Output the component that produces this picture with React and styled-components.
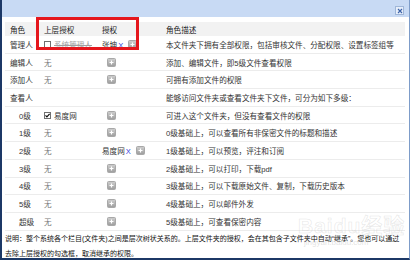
import React from "react";
import styled, { createGlobalStyle } from "styled-components";

const GlobalStyle = createGlobalStyle`
  html, body {
    margin: 0;
    padding: 0;
    background: #fff;
  }
  body {
    font-family: "Liberation Sans", "Noto Sans CJK SC", sans-serif;
    font-size: 7.6px;
    color: #333;
  }
  * {
    box-sizing: border-box;
  }
`;

const roles = [
  {
    name: "管理人",
    upper: { kind: "strike", text: "系统管理人" },
    grants: ["张坤"],
    desc: "本文件夹下拥有全部权限，包括审核文件、分配权限、设置标签组等",
  },
  { name: "编辑人", upper: "无", desc: "添加、编辑文件，即5级文件查看权限" },
  { name: "添加人", upper: "无", desc: "可拥有添加文件的权限" },
  {
    name: "查看人",
    group: true,
    desc: "能够访问文件夹或查看文件夹下文件，可分为如下多级：",
  },
  {
    name: "0级",
    level: true,
    upper: { kind: "checked", text: "易度网" },
    desc: "可进入这个文件夹，但没有查看文件的权限",
  },
  { name: "1级", level: true, upper: "无", desc: "0级基础上，可以查看所有非保密文件的标题和描述" },
  {
    name: "2级",
    level: true,
    upper: "无",
    grants: ["易度网"],
    desc: "1级基础上，可以预览，评注和订阅",
  },
  { name: "3级", level: true, upper: "无", desc: "2级基础上，可以打印，下载pdf" },
  { name: "4级", level: true, upper: "无", desc: "3级基础上，可以下载原始文件、复制，下载历史版本" },
  { name: "5级", level: true, upper: "无", desc: "4级基础上，可以邮件外发" },
  { name: "超级", level: true, upper: "无", desc: "5级基础上，可查看保密内容" },
];

const PlusIcon = () => (
  <svg width="9" height="9" viewBox="0 0 9 9">
    <defs>
      <linearGradient id="pg" x1="0" y1="0" x2="0" y2="1">
        <stop offset="0" stopColor="#cfcfcf" />
        <stop offset="1" stopColor="#9c9c9c" />
      </linearGradient>
    </defs>
    <rect x="0.5" y="0.5" width="8" height="8" rx="1" fill="url(#pg)" stroke="#a8a8a8" />
    <path d="M2.5 4.5h4M4.5 2.5v4" stroke="#fff" strokeWidth="1.2" />
  </svg>
);

const CheckIcon = ({ checked }) => (
  <svg width="7" height="7" viewBox="0 0 7 7">
    <rect x="0.5" y="0.5" width="6" height="6" fill="#fff" stroke="#6f6f6f" />
    {checked && <path d="M1.5 3.4l1.4 1.5L5.6 1.8" fill="none" stroke="#111" strokeWidth="1.2" />}
  </svg>
);

const App = () => {
  return (
    <>
      <GlobalStyle />
      <Window>
        <TitleBar>
          <CloseButton>
            <svg width="6" height="6" viewBox="0 0 6 6">
              <path d="M1 1l4 4M5 1L1 5" stroke="#3b62a8" strokeWidth="1.1" />
            </svg>
          </CloseButton>
        </TitleBar>

        <Table>
          <HeaderRow>
            <Cell>角色</Cell>
            <Cell>上层授权</Cell>
            <Cell>授权</Cell>
            <Cell>角色描述</Cell>
          </HeaderRow>
          {roles.map((r) => (
            <Row key={r.name}>
              <Cell $indent={r.level}>{r.name}</Cell>
              <Cell>
                {typeof r.upper === "string" && <Muted>{r.upper}</Muted>}
                {r.upper && r.upper.kind === "strike" && (
                  <>
                    <CheckIcon />
                    <Struck>{r.upper.text}</Struck>
                  </>
                )}
                {r.upper && r.upper.kind === "checked" && (
                  <>
                    <CheckIcon checked />
                    <Inherited>{r.upper.text}</Inherited>
                  </>
                )}
              </Cell>
              <Cell>
                {(r.grants || []).map((g) => (
                  <Grant key={g}>
                    {g}
                    <Remove>X</Remove>
                  </Grant>
                ))}
                {!r.group && (
                  <AddButton>
                    <PlusIcon />
                  </AddButton>
                )}
              </Cell>
              <Cell>{r.desc}</Cell>
            </Row>
          ))}
        </Table>

        <Note>
          说明：整个系统各个栏目(文件夹)之间是层次树状关系的。上层文件夹的授权，会在其包含子文件夹中自动“继承”。您也可以通过
          <br />
          去除上层授权的勾选框，取消继承的权限。
        </Note>

        <Highlight />
        <Watermark>
          <span className="brand">Baidu经验</span>
          <span className="site">jingyan.baidu.com</span>
        </Watermark>
      </Window>
    </>
  );
};

export default App;

const Window = styled.div`
  position: relative;
  width: 410px;
  height: 260px;
  background: #fff;
  border-left: 2px solid #1c3866;
  border-right: 1px solid #7d9cc9;
  border-bottom: 2px solid #1c3866;
  overflow: hidden;
`;

const TitleBar = styled.div`
  height: 17px;
  background: #c8daf4;
  display: flex;
  justify-content: flex-end;
  align-items: flex-start;
  padding: 6px 5px 0 0;
`;

const CloseButton = styled.span`
  width: 9px;
  height: 9px;
  display: flex;
  align-items: center;
  justify-content: center;
  background: #e6eefa;
  border: 1px solid #9fb6d8;
`;

const Table = styled.div`
  margin: 5px 4px 0 3px;
`;

const Row = styled.div`
  display: grid;
  grid-template-columns: 34px 58px 64px 1fr;
  align-items: center;
  height: 17.7px;
  border-bottom: 1px solid #ececec;
  white-space: nowrap;
`;

const HeaderRow = styled(Row)`
  height: 14px;
  background: #f2f2f2;
  border-bottom: none;
  color: #222;
`;

const Cell = styled.div`
  display: flex;
  align-items: center;
  padding-left: ${(p) => (p.$indent ? "14px" : "5px")};
  overflow: hidden;
`;

const Muted = styled.span`
  color: #777;
`;

const Struck = styled.span`
  margin-left: 3px;
  color: #a0a0a0;
  text-decoration: line-through;
`;

const Inherited = styled.span`
  margin-left: 3px;
  color: #333;
`;

const Grant = styled.span`
  color: #333;
`;

const Remove = styled.span`
  color: #3344dd;
  margin-left: 1px;
`;

const AddButton = styled.span`
  display: inline-flex;
  margin-left: 5px;
`;

const Note = styled.div`
  margin: 0 2px 0 3px;
  font-size: 7px;
  line-height: 15px;
  color: #111;
  white-space: nowrap;
`;

const Highlight = styled.div`
  position: absolute;
  left: 34px;
  top: 17px;
  width: 103px;
  height: 33px;
  border: 3px solid #e5171d;
`;

const Watermark = styled.div`
  position: absolute;
  left: 296px;
  top: 214px;
  display: flex;
  flex-direction: column;
  align-items: flex-start;
  pointer-events: none;
  color: transparent;

  .brand {
    font-size: 21px;
    font-weight: bold;
    line-height: 24px;
    letter-spacing: 1px;
    -webkit-text-stroke: 0.6px rgba(200, 200, 200, 0.45);
  }
  .site {
    margin-left: 6px;
    font-size: 8px;
    line-height: 10px;
    color: rgba(200, 200, 200, 0.5);
  }
`;
